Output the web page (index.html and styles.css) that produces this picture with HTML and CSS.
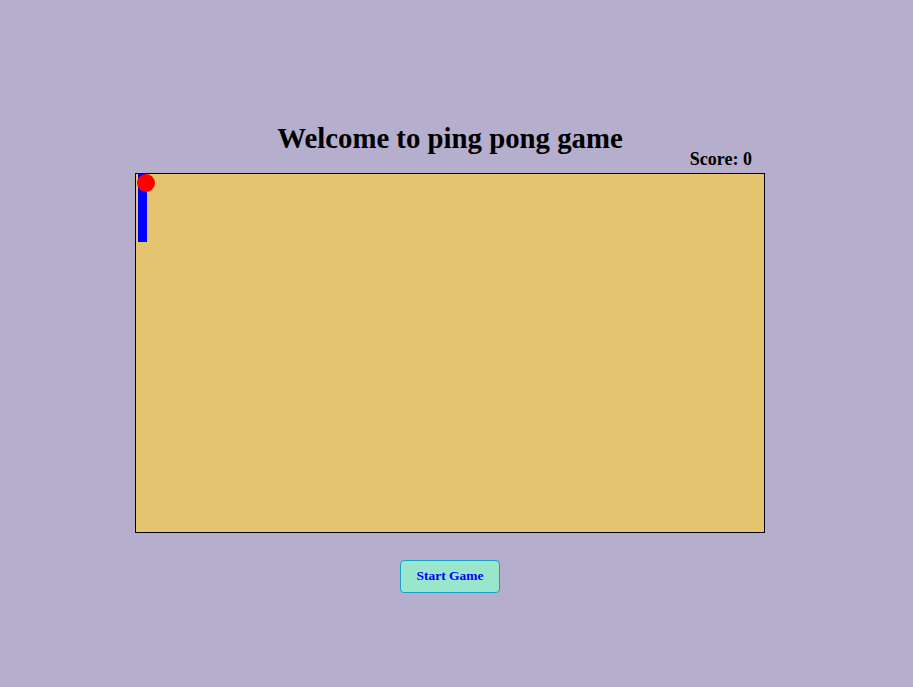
FILE: index.html
```html
<!DOCTYPE html>
<html>
<head>
<meta charset="utf-8">
<title>Ping Pong</title>
<link rel="stylesheet" href="styles.css">
</head>
<body>
<div class="wrap">
  <h1 class="title">Welcome to ping pong game</h1>
  <div class="score">Score: <span>0</span></div>
  <div class="board">
    <div class="paddle"></div>
    <div class="ball"></div>
  </div>
  <button class="start">Start Game</button>
</div>
</body>
</html>
```
FILE: styles.css
```css
html, body {
  margin: 0;
  padding: 0;
  background: #b5aecd;
  font-family: "Liberation Serif", "Times New Roman", serif;
}
.wrap {
  width: 900px;
  display: flex;
  flex-direction: column;
  align-items: center;
  padding-top: 122px;
}
.title {
  margin: 0 0 -2px;
  font-size: 28.8px;
  line-height: 33px;
  height: 33px;
  font-weight: bold;
  color: #000;
}
.score {
  width: 630px;
  box-sizing: border-box;
  padding-right: 13px;
  text-align: right;
  font-size: 18px;
  line-height: 12px;
  height: 12px;
  font-weight: bold;
  margin-bottom: 8px;
}
.board {
  position: relative;
  width: 630px;
  height: 360px;
  box-sizing: border-box;
  border: 1px solid #000;
  background: #e5c46f;
}
.paddle {
  position: absolute;
  left: 2px;
  top: 0;
  width: 9px;
  height: 68px;
  background: #0000ff;
}
.ball {
  position: absolute;
  left: 1px;
  top: 0;
  width: 18px;
  height: 18px;
  border-radius: 50%;
  background: #ff0000;
}
.start {
  margin-top: 27px;
  width: 100px;
  height: 33px;
  box-sizing: border-box;
  background: #99e6cc;
  border: 1px solid #1a9fc4;
  border-radius: 4px;
  color: #0000ff;
  font-family: "Liberation Serif", "Times New Roman", serif;
  font-weight: bold;
  font-size: 13.5px;
  padding: 0 0 2px;
}
```
